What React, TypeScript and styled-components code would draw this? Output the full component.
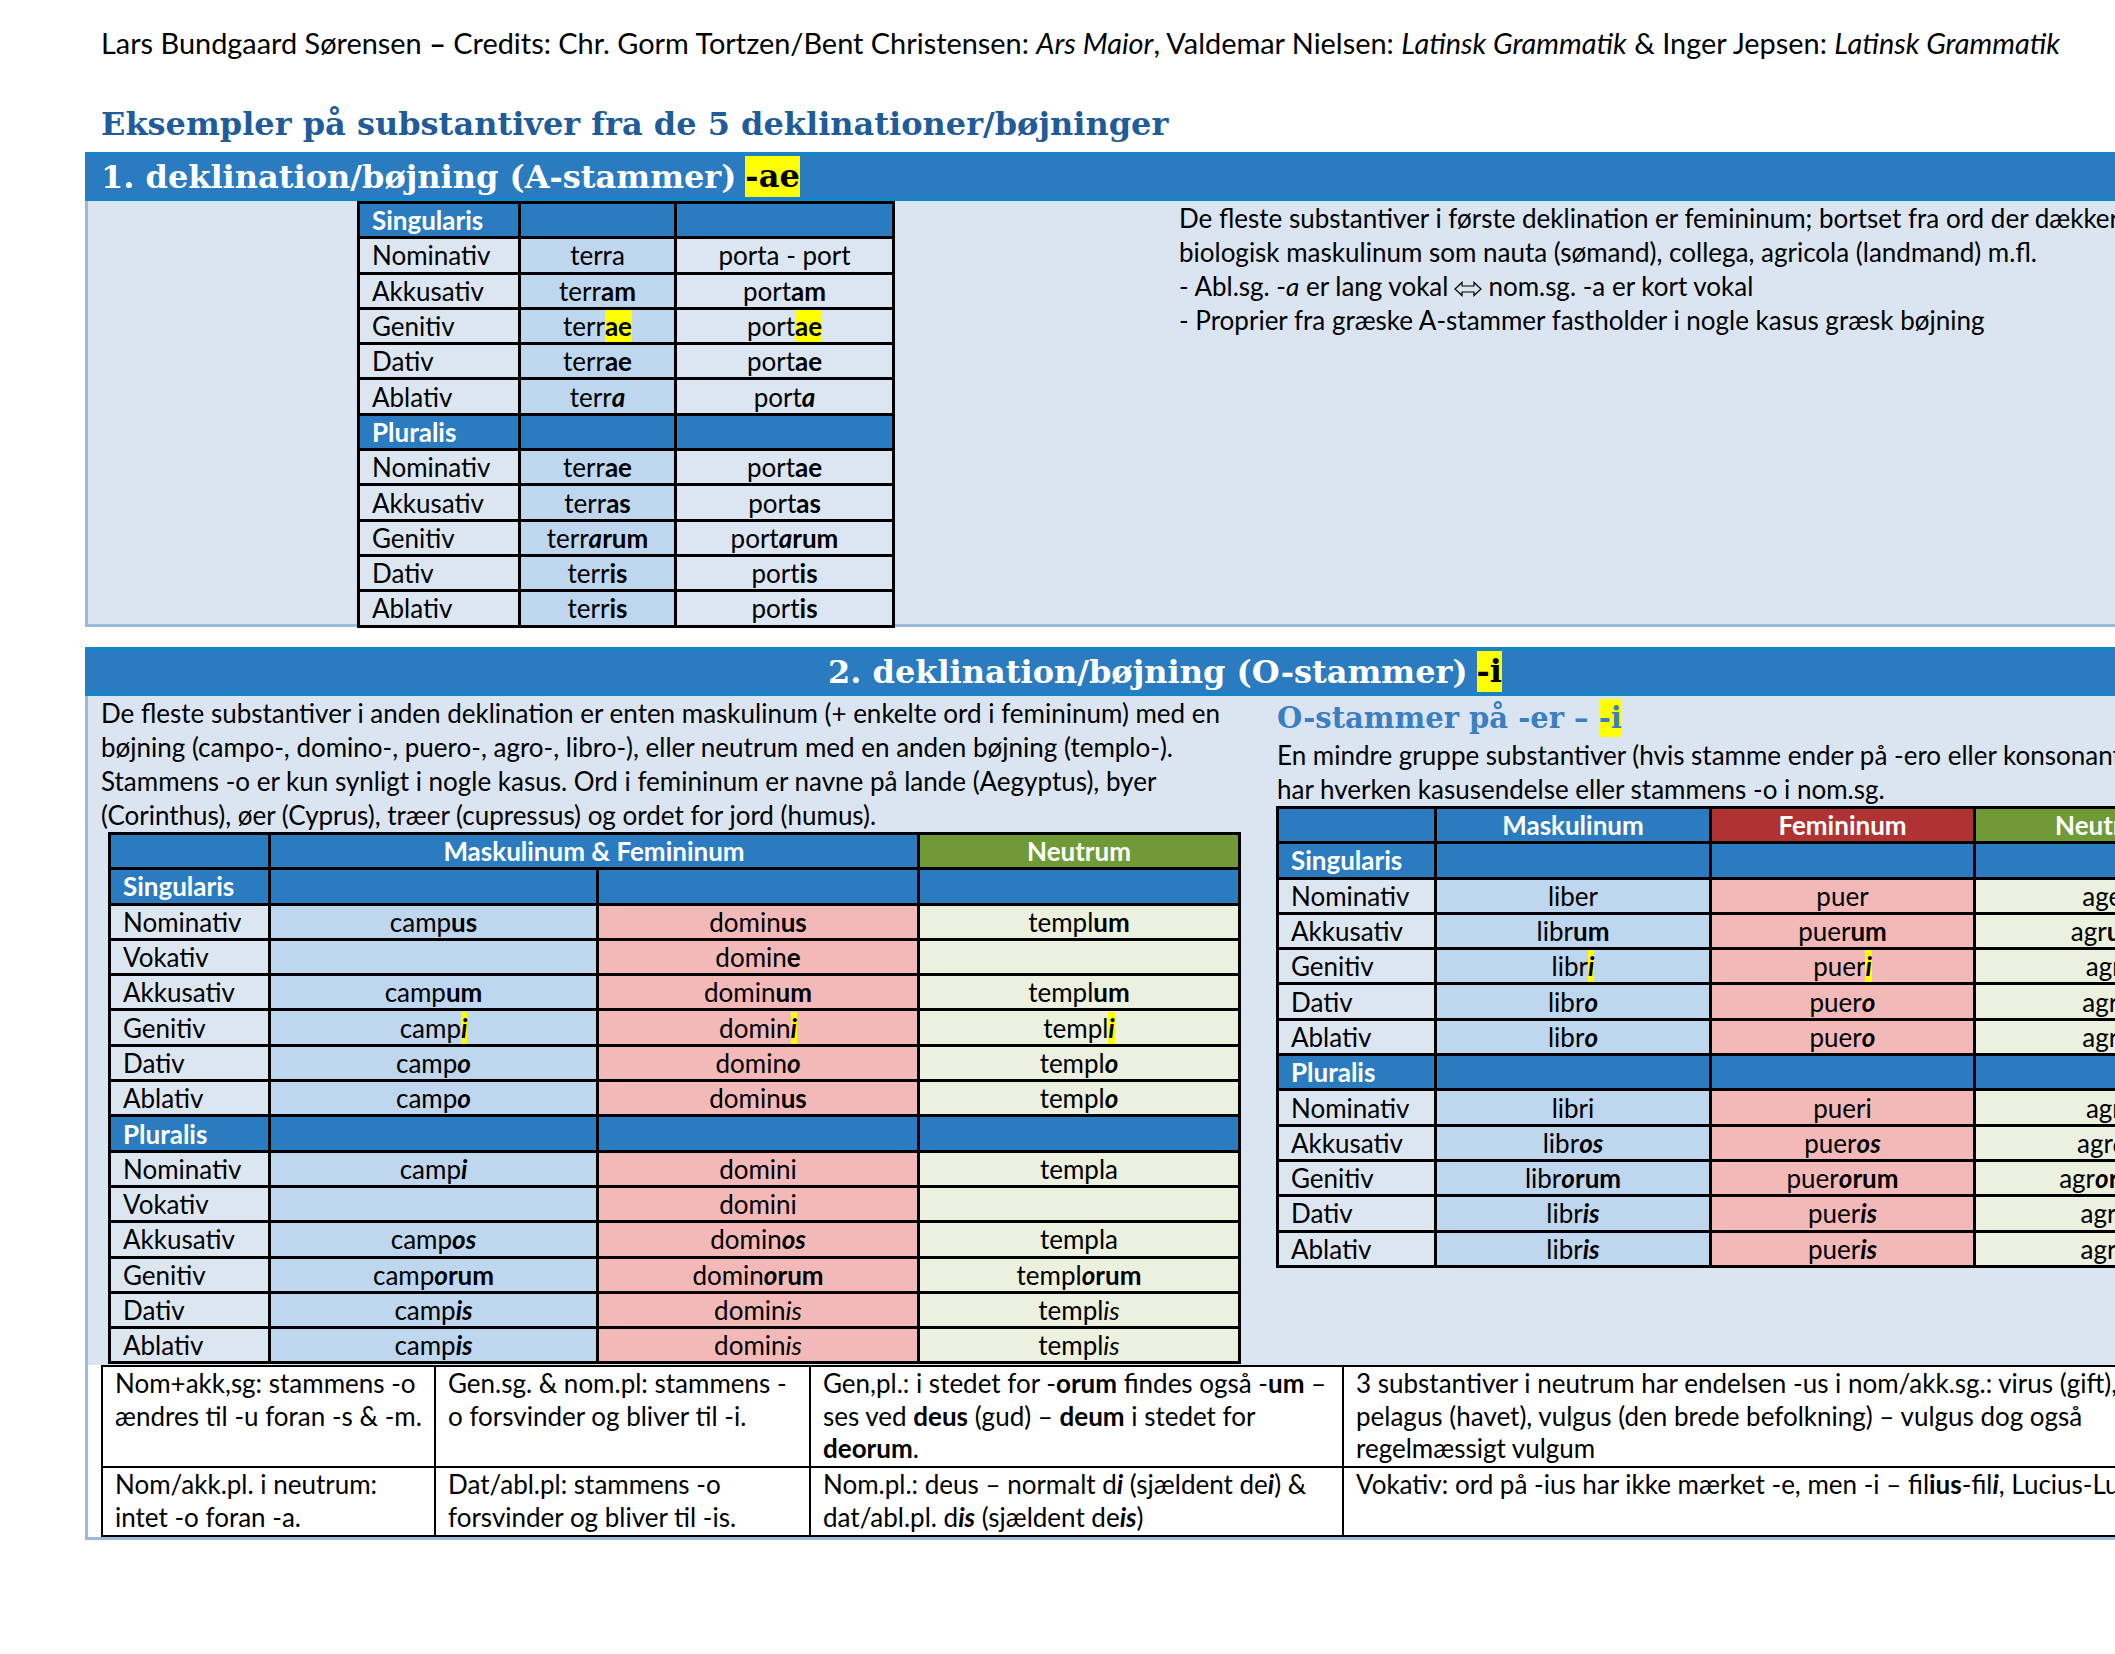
import React from 'react';
import styled, { createGlobalStyle } from 'styled-components';

const GlobalStyle = createGlobalStyle`
  html, body { margin: 0; padding: 0; background: #fff; overflow: hidden; }
  body { font-family: Lato, "Liberation Sans", sans-serif; color: #000; }
`;

const SANS = 'Lato, "Liberation Sans", sans-serif';
const SERIF = '"DejaVu Serif", "Liberation Serif", serif';

const Page = styled.div`
  width: 2160px;
  padding: 26px 0 0 85px;
  font-family: ${SANS};
  font-size: 26px;
`;

const Credits = styled.div`
  padding-left: 16px;
  font-size: 28.9px;
  line-height: 34px;
  white-space: nowrap;
`;

const Title = styled.h1`
  margin: 42px 0 6px 0;
  padding-left: 16px;
  font-family: ${SERIF};
  font-weight: 700;
  font-size: 32px;
  line-height: 44px;
  color: #1f5c99;
  white-space: nowrap;
`;

const Bar = styled.div<{ $center?: boolean }>`
  height: 49px;
  box-sizing: border-box;
  background: #2a7bbf;
  border-top: 4px solid #1784c8;
  border-bottom: 4px solid #1784c8;
  display: flex;
  align-items: center;
  justify-content: ${(p) => (p.$center ? 'center' : 'flex-start')};
  padding-left: ${(p) => (p.$center ? 0 : 16)}px;
  font-family: ${SERIF};
  font-weight: 700;
  font-size: 32px;
  color: #fff;
  white-space: nowrap;
`;

const BarMark = styled.span`
  background: #ffff00;
  color: #000;
  display: inline-block;
  line-height: 41px;
  margin-left: 9px;
`;

const Section = styled.div<{ $white?: boolean }>`
  background: ${(p) => (p.$white ? '#fff' : '#dae5f1')};
  border-left: 3px solid #9cb8da;
  border-bottom: ${(p) => (p.$white ? '3px solid #9cb8da' : 'none')};
  box-sizing: border-box;
`;

const Section1Body = styled(Section)`
  display: flex;
  align-items: flex-start;
  padding-left: 269px;
  gap: 284px;
  height: 426px;
  border-bottom: 3px solid #9cb8da;
`;

const Section2Body = styled(Section)`
  display: grid;
  grid-template-columns: 1189px 1fr;
  height: 669px;
`;

const Spacer = styled.div`
  height: 20px;
`;

const Para = styled.p`
  margin: 0;
  line-height: 34px;
  white-space: nowrap;
`;

const LeftCol = styled.div`
  display: flex;
  flex-direction: column;
  padding-left: 13px;
`;

const RightCol = styled.div`
  display: flex;
  flex-direction: column;
`;

const SubHeading = styled.h2`
  margin: 2px 0 0 0;
  font-family: ${SERIF};
  font-weight: 700;
  font-size: 29px;
  line-height: 40px;
  color: #3b7fc1;
  white-space: nowrap;
`;

const SubMark = styled.span`
  background: #ffff00;
  display: inline-block;
  line-height: 38px;
`;

type Bg = 'label' | 'blue' | 'light' | 'pink' | 'green' | 'head' | 'red' | 'olive';

const bgMap: Record<Bg, string> = {
  label: '#dce6f1',
  blue: '#bed6ee',
  light: '#dbe6f2',
  pink: '#f3b9b9',
  green: '#ebf1de',
  head: '#2a7bbf',
  red: '#b03333',
  olive: '#6f9a36',
};

const Grid = styled.table<{ $w: number; $ml?: number }>`
  border-collapse: collapse;
  table-layout: fixed;
  width: ${(p) => p.$w}px;
  margin-left: ${(p) => p.$ml ?? 0}px;
  font-size: 26px;
`;

const Td = styled.td<{ $bg: Bg; $left?: boolean }>`
  border: 3px solid #000;
  height: 35.3px;
  box-sizing: border-box;
  padding: 0 12px;
  background: ${(p) => bgMap[p.$bg]};
  color: ${(p) => (['head', 'red', 'olive'].includes(p.$bg) ? '#fff' : '#000')};
  font-weight: ${(p) => (['head', 'red', 'olive'].includes(p.$bg) ? 700 : 400)};
  text-align: ${(p) => (p.$left ? 'left' : 'center')};
  line-height: 28px;
  white-space: nowrap;
  overflow: hidden;
`;

const B = styled.b`
  font-weight: 700;
`;
const BI = styled.b`
  font-weight: 700;
  font-style: italic;
`;
const It = styled.i`
  font-style: italic;
`;
const Mark = styled.mark<{ $italic?: boolean }>`
  background: #ffff00;
  color: #000;
  font-weight: 700;
  font-style: ${(p) => (p.$italic ? 'italic' : 'normal')};
`;

const ArrowSvg = styled.svg`
  width: 28px;
  height: 16px;
  margin: 0 6px;
  vertical-align: -1px;
`;

function OutlineArrow() {
  return (
    <ArrowSvg viewBox="0 0 28 16" aria-hidden>
      <polygon
        points="1,8 8,1.5 8,5 20,5 20,1.5 27,8 20,14.5 20,11 8,11 8,14.5"
        fill="none"
        stroke="#000"
        strokeWidth="1.2"
        strokeLinejoin="miter"
      />
    </ArrowSvg>
  );
}

type Row = { label: string; cells: React.ReactNode[]; head?: boolean };

const t1Cols = [161, 156, 218];
const t1: Row[] = [
  { label: 'Singularis', cells: ['', ''], head: true },
  { label: 'Nominativ', cells: ['terra', 'porta - port'] },
  { label: 'Akkusativ', cells: [<>terr<B>am</B></>, <>port<B>am</B></>] },
  { label: 'Genitiv', cells: [<>terr<Mark>ae</Mark></>, <>port<Mark>ae</Mark></>] },
  { label: 'Dativ', cells: [<>terr<B>ae</B></>, <>port<B>ae</B></>] },
  { label: 'Ablativ', cells: [<>terr<BI>a</BI></>, <>port<BI>a</BI></>] },
  { label: 'Pluralis', cells: ['', ''], head: true },
  { label: 'Nominativ', cells: [<>terr<B>ae</B></>, <>port<B>ae</B></>] },
  { label: 'Akkusativ', cells: [<>terr<B>as</B></>, <>port<B>as</B></>] },
  { label: 'Genitiv', cells: [<>terr<BI>a</BI><B>rum</B></>, <>port<BI>a</BI><B>rum</B></>] },
  { label: 'Dativ', cells: [<>terr<B>is</B></>, <>port<B>is</B></>] },
  { label: 'Ablativ', cells: [<>terr<B>is</B></>, <>port<B>is</B></>] },
];

const t2Cols = [160, 328, 321, 321];
const t2: Row[] = [
  { label: 'Singularis', cells: ['', '', ''], head: true },
  { label: 'Nominativ', cells: [<>camp<B>us</B></>, <>domin<B>us</B></>, <>templ<B>um</B></>] },
  { label: 'Vokativ', cells: ['', <>domin<B>e</B></>, ''] },
  { label: 'Akkusativ', cells: [<>camp<B>um</B></>, <>domin<B>um</B></>, <>templ<B>um</B></>] },
  { label: 'Genitiv', cells: [<>camp<Mark $italic>i</Mark></>, <>domin<Mark $italic>i</Mark></>, <>templ<Mark $italic>i</Mark></>] },
  { label: 'Dativ', cells: [<>camp<BI>o</BI></>, <>domin<BI>o</BI></>, <>templ<BI>o</BI></>] },
  { label: 'Ablativ', cells: [<>camp<BI>o</BI></>, <>domin<B>us</B></>, <>templ<BI>o</BI></>] },
  { label: 'Pluralis', cells: ['', '', ''], head: true },
  { label: 'Nominativ', cells: [<>camp<BI>i</BI></>, 'domini', 'templa'] },
  { label: 'Vokativ', cells: ['', 'domini', ''] },
  { label: 'Akkusativ', cells: [<>camp<BI>os</BI></>, <>domin<BI>os</BI></>, 'templa'] },
  { label: 'Genitiv', cells: [<>camp<BI>o</BI><B>rum</B></>, <>domin<BI>o</BI><B>rum</B></>, <>templ<BI>o</BI><B>rum</B></>] },
  { label: 'Dativ', cells: [<>camp<BI>is</BI></>, <>domin<It>is</It></>, <>templ<It>is</It></>] },
  { label: 'Ablativ', cells: [<>camp<BI>is</BI></>, <>domin<It>is</It></>, <>templ<It>is</It></>] },
];

const t3Cols = [158, 275, 264, 265];
const t3: Row[] = [
  { label: 'Singularis', cells: ['', '', ''], head: true },
  { label: 'Nominativ', cells: ['liber', 'puer', 'ager'] },
  { label: 'Akkusativ', cells: [<>libr<B>um</B></>, <>puer<B>um</B></>, <>agr<B>um</B></>] },
  { label: 'Genitiv', cells: [<>libr<Mark $italic>i</Mark></>, <>puer<Mark $italic>i</Mark></>, <>agr<Mark $italic>i</Mark></>] },
  { label: 'Dativ', cells: [<>libr<BI>o</BI></>, <>puer<BI>o</BI></>, <>agr<BI>o</BI></>] },
  { label: 'Ablativ', cells: [<>libr<BI>o</BI></>, <>puer<BI>o</BI></>, <>agr<BI>o</BI></>] },
  { label: 'Pluralis', cells: ['', '', ''], head: true },
  { label: 'Nominativ', cells: ['libri', 'pueri', 'agri'] },
  { label: 'Akkusativ', cells: [<>libr<BI>os</BI></>, <>puer<BI>os</BI></>, <>agr<BI>os</BI></>] },
  { label: 'Genitiv', cells: [<>libr<BI>o</BI><B>rum</B></>, <>puer<BI>o</BI><B>rum</B></>, <>agr<BI>o</BI><B>rum</B></>] },
  { label: 'Dativ', cells: [<>libr<BI>is</BI></>, <>puer<BI>is</BI></>, <>agr<BI>is</BI></>] },
  { label: 'Ablativ', cells: [<>libr<BI>is</BI></>, <>puer<BI>is</BI></>, <>agr<BI>is</BI></>] },
];

function Body({ rows, bgs }: { rows: Row[]; bgs: Bg[] }) {
  return (
    <>
      {rows.map((r, i) => (
        <tr key={i}>
          <Td $bg={r.head ? 'head' : 'label'} $left>
            {r.label}
          </Td>
          {r.cells.map((c, j) => (
            <Td key={j} $bg={r.head ? 'head' : bgs[j]}>
              {c}
            </Td>
          ))}
        </tr>
      ))}
    </>
  );
}

function Cols({ w }: { w: number[] }) {
  return (
    <colgroup>
      {w.map((x, i) => (
        <col key={i} style={{ width: x }} />
      ))}
    </colgroup>
  );
}

const NotesTable = styled.table`
  border-collapse: collapse;
  table-layout: fixed;
  width: 2150px;
  margin-left: 13px;
  font-size: 26px;
`;

const NoteTd = styled.td<{ $h: number }>`
  border: 2px solid #000;
  height: ${(p) => p.$h}px;
  box-sizing: border-box;
  vertical-align: top;
  padding: 0 12px;
  line-height: 32.5px;
  white-space: nowrap;
  overflow: hidden;
`;

export default function App() {
  return (
    <>
      <GlobalStyle />
      <Page>
        <Credits>
          Lars Bundgaard Sørensen <b>–</b> Credits: Chr. Gorm Tortzen/Bent Christensen: <i>Ars Maior</i>, Valdemar
          Nielsen: <i>Latinsk Grammatik</i> &amp; Inger Jepsen: <i>Latinsk Grammatik</i>
        </Credits>
        <Title>Eksempler på substantiver fra de 5 deklinationer/bøjninger</Title>

        <Bar>
          1. deklination/bøjning (A-stammer)<BarMark>-ae</BarMark>
        </Bar>
        <Section1Body>
          <Grid $w={535}>
            <Cols w={t1Cols} />
            <tbody>
              <Body rows={t1} bgs={['blue', 'light']} />
            </tbody>
          </Grid>
          <div>
            <Para>De fleste substantiver i første deklination er femininum; bortset fra ord der dækker over</Para>
            <Para>biologisk maskulinum som nauta (sømand), collega, agricola (landmand) m.fl.</Para>
            <Para>
              - Abl.sg. -<It>a</It> er lang vokal
              <OutlineArrow />
              nom.sg. -a er kort vokal
            </Para>
            <Para>- Proprier fra græske A-stammer fastholder i nogle kasus græsk bøjning</Para>
          </div>
        </Section1Body>

        <Spacer />

        <Bar $center>
          2. deklination/bøjning (O-stammer)<BarMark>-i</BarMark>
        </Bar>
        <Section2Body>
          <LeftCol>
            <Para>De fleste substantiver i anden deklination er enten maskulinum (+ enkelte ord i femininum) med en</Para>
            <Para>bøjning (campo-, domino-, puero-, agro-, libro-), eller neutrum med en anden bøjning (templo-).</Para>
            <Para>Stammens -o er kun synligt i nogle kasus. Ord i femininum er navne på lande (Aegyptus), byer</Para>
            <Para>(Corinthus), øer (Cyprus), træer (cupressus) og ordet for jord (humus).</Para>
            <Grid $w={1130} $ml={7}>
              <Cols w={t2Cols} />
              <tbody>
                <tr>
                  <Td $bg="head" />
                  <Td $bg="head" colSpan={2}>
                    Maskulinum &amp; Femininum
                  </Td>
                  <Td $bg="olive">Neutrum</Td>
                </tr>
                <Body rows={t2} bgs={['blue', 'pink', 'green']} />
              </tbody>
            </Grid>
          </LeftCol>
          <RightCol>
            <SubHeading>
              O-stammer på -er – <SubMark>-i</SubMark>
            </SubHeading>
            <Para>En mindre gruppe substantiver (hvis stamme ender på -ero eller konsonant + ro)</Para>
            <Para>har hverken kasusendelse eller stammens -o i nom.sg.</Para>
            <Grid $w={962} $ml={-1}>
              <Cols w={t3Cols} />
              <tbody>
                <tr>
                  <Td $bg="head" />
                  <Td $bg="head">Maskulinum</Td>
                  <Td $bg="red">Femininum</Td>
                  <Td $bg="olive">Neutrum</Td>
                </tr>
                <Body rows={t3} bgs={['blue', 'pink', 'green']} />
              </tbody>
            </Grid>
          </RightCol>
        </Section2Body>

        <Section $white>
          <NotesTable>
            <colgroup>
              <col style={{ width: 333 }} />
              <col style={{ width: 375 }} />
              <col style={{ width: 533 }} />
              <col style={{ width: 909 }} />
            </colgroup>
            <tbody>
              <tr>
                <NoteTd $h={101}>
                  Nom+akk,sg: stammens -o
                  <br />
                  ændres til -u foran -s &amp; -m.
                </NoteTd>
                <NoteTd $h={101}>
                  Gen.sg. &amp; nom.pl: stammens -
                  <br />o forsvinder og bliver til -i.
                </NoteTd>
                <NoteTd $h={101}>
                  Gen,pl.: i stedet for -<B>orum</B> findes også -<B>um</B> –
                  <br />
                  ses ved <B>deus</B> (gud) – <B>deum</B> i stedet for
                  <br />
                  <B>deorum</B>.
                </NoteTd>
                <NoteTd $h={101}>
                  3 substantiver i neutrum har endelsen -us i nom/akk.sg.: virus (gift),
                  <br />
                  pelagus (havet), vulgus (den brede befolkning) – vulgus dog også
                  <br />
                  regelmæssigt vulgum
                </NoteTd>
              </tr>
              <tr>
                <NoteTd $h={69}>
                  Nom/akk.pl. i neutrum:
                  <br />
                  intet -o foran -a.
                </NoteTd>
                <NoteTd $h={69}>
                  Dat/abl.pl: stammens -o
                  <br />
                  forsvinder og bliver til -is.
                </NoteTd>
                <NoteTd $h={69}>
                  Nom.pl.: deus – normalt d<BI>i</BI> (sjældent de<BI>i</BI>) &amp;
                  <br />
                  dat/abl.pl. d<BI>is</BI> (sjældent de<BI>is</BI>)
                </NoteTd>
                <NoteTd $h={69}>
                  Vokativ: ord på -ius har ikke mærket -e, men -i – fil<B>ius</B>-fil<BI>i</BI>, Lucius-Luci
                </NoteTd>
              </tr>
            </tbody>
          </NotesTable>
        </Section>
      </Page>
    </>
  );
}
